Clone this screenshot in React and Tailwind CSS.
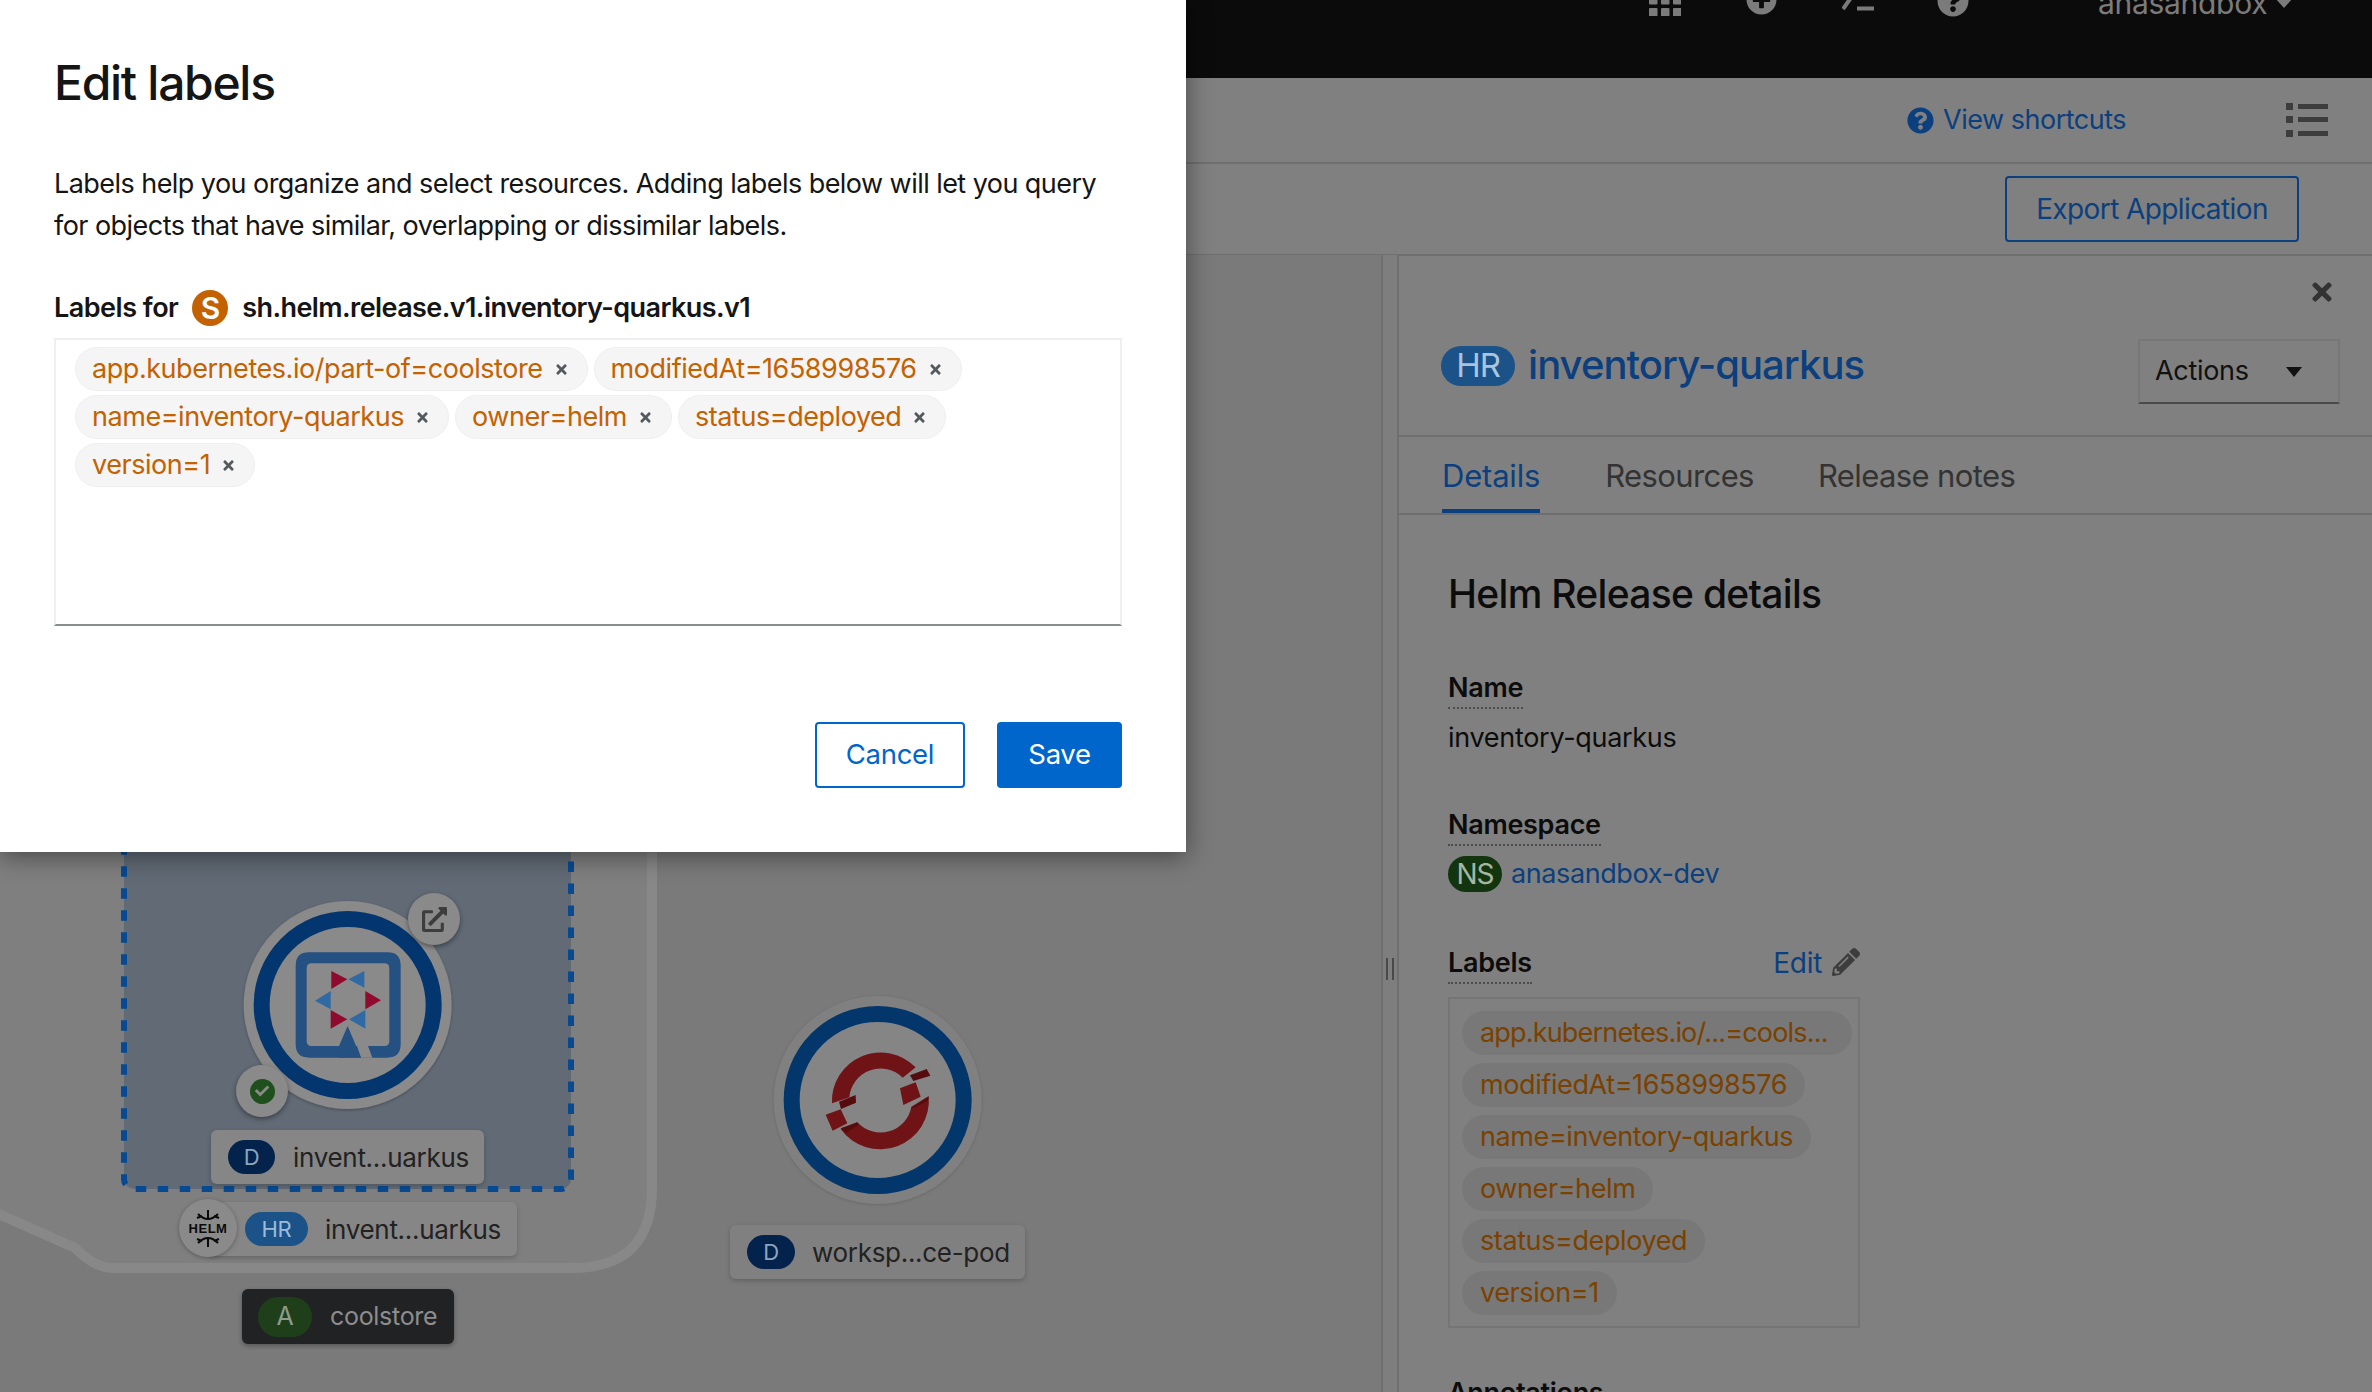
import React from "react";
import { FaQuestionCircle, FaPencilAlt, FaTimes, FaCheck, FaExternalLinkAlt, FaPlusCircle } from "react-icons/fa";

function ModalChip({ text }) {
  return (
    <span className="inline-flex items-center h-[44px] rounded-full bg-[#f5f5f5] border border-[#efefef] pl-[16px] pr-[18px] text-[#c46100] text-[27px] tracking-[-0.45px] whitespace-nowrap">
      {text}
      <FaTimes className="ml-[11px] w-[15px] h-[15px] text-[#55595e]" />
    </span>
  );
}

function PanelChip({ text, className = "tracking-[-0.4px] pr-[18px]" }) {
  return (
    <span className={`inline-flex self-start items-center h-[44px] rounded-full bg-[#787878] pl-[18px] text-[#7a4100] text-[27px] whitespace-nowrap ${className}`}>
      {text}
    </span>
  );
}

function NodeLabel({ badge, text, className, badgeClass }) {
  return (
    <div className={`absolute flex items-center h-[54px] rounded-[6px] bg-[#868686] shadow-[0_2px_5px_rgba(0,0,0,0.2)] text-[#222222] text-[26px] tracking-[-0.3px] whitespace-nowrap ${className}`}>
      <span className={`flex items-center justify-center h-[34px] rounded-full bg-[#03234d] text-[#8fa3bc] text-[22px] ${badgeClass}`}>{badge}</span>
      {text}
    </div>
  );
}

function Term({ children }) {
  return <span className="inline-block text-[#0c0c0c] text-[27px] font-semibold tracking-[-0.3px] leading-[34px] pb-[2px] border-b-2 border-dotted border-[#4d4d4d]">{children}</span>;
}

export default function App() {
  return (
    <div className="relative w-[2372px] h-[1392px] overflow-hidden bg-[#7a7a7a] [font-family:Inter,sans-serif]">
      {/* masthead */}
      <div className="h-[78px] bg-[#0b0b0b] flex items-start text-[#7b7b7b] pl-[1649px]">
        <svg viewBox="0 0 32 32" className="w-[32px] h-[32px] -mt-[16px]" fill="#7b7b7b">
          {[0, 12, 24].map((x) => [0, 12, 24].map((y) => <rect key={x + "-" + y} x={x} y={y} width="8.5" height="8.5" rx="1" />))}
        </svg>
        <FaPlusCircle className="w-[31px] h-[31px] -mt-[16px] ml-[65px]" />
        <svg viewBox="0 0 32 24" className="w-[32px] h-[24px] -mt-[13px] ml-[65px]" fill="none" stroke="#7b7b7b" strokeWidth="4">
          <path d="M1 22 L8 12" />
          <path d="M15 21.5 H32" />
        </svg>
        <FaQuestionCircle className="w-[32px] h-[32px] -mt-[15px] ml-[63px]" />
        <span className="text-[30px] leading-[32px] -mt-[13px] ml-[129px] tracking-[-0.3px]">anasandbox</span>
        <svg viewBox="0 0 18 10" className="w-[18px] h-[10px] -mt-[2px] ml-[8px]" fill="#7b7b7b"><path d="M0 0 H18 L9 10 Z" /></svg>
      </div>

      {/* shortcuts bar */}
      <div className="h-[86px] bg-[#808080] border-b-2 border-[#6f6f6f] flex items-center justify-end pr-[44px]">
        <FaQuestionCircle className="w-[27px] h-[27px] text-[#0b3f7e]" />
        <span className="ml-[9px] text-[#0b3f7e] text-[27px] tracking-[-0.5px]">View shortcuts</span>
        <svg viewBox="0 0 42 34" className="w-[42px] h-[34px] ml-[160px]" fill="#3d3d3d">
          <rect x="0" y="0" width="7" height="7" />
          <rect x="12" y="1" width="30" height="5" />
          <rect x="0" y="13" width="7" height="7" />
          <rect x="12" y="14" width="30" height="5" />
          <rect x="0" y="27" width="7" height="7" />
          <rect x="12" y="28" width="30" height="5" />
        </svg>
      </div>

      {/* toolbar */}
      <div className="h-[92px] bg-[#808080] border-b-2 border-[#6f6f6f] flex items-center justify-end pr-[73px]">
        <span className="flex items-center justify-center w-[294px] h-[66px] rounded-[4px] border-2 border-[#0b3f7e] text-[#0b3f7e] text-[28px] tracking-[-0.6px]">Export Application</span>
      </div>

      {/* body */}
      <div className="flex h-[1136px]">
        <div className="relative w-[1381px] -mt-px h-[1137px] bg-[#7a7a7a]">
          <svg viewBox="0 255 1381 1137" className="absolute left-0 top-0 w-[1381px] h-[1137px]">
            <path d="M652 700 V1188 Q652 1268 572 1268 H112 Q95 1268 75 1248 L-10 1210 V700 Z" fill="#7f7f7f" stroke="#888888" strokeWidth="10" />
            <rect x="124" y="700" width="447" height="489" rx="10" fill="#616a75" stroke="#074a91" strokeWidth="6" strokeDasharray="10.5 11.5" />
          </svg>

          {/* quarkus node */}
          <svg viewBox="0 0 840 720" className="absolute left-[200px] top-[625px] w-[280px] h-[240px]">
            <defs>
              <filter id="s1" x="-20%" y="-20%" width="140%" height="140%">
                <feDropShadow dx="0" dy="3" stdDeviation="5" floodColor="#000" floodOpacity="0.3" />
              </filter>
            </defs>
            <circle cx="443" cy="375" r="312" fill="#8a8a8a" filter="url(#s1)" />
            <circle cx="443" cy="375" r="258" fill="none" stroke="#03366f" strokeWidth="48" />
            <path fillRule="evenodd" fill="#245082" d="M327 217 H562 Q602 217 602 257 V493 Q602 533 562 533 H327 Q287 533 287 493 V257 Q287 217 327 217 Z M335 250 Q320 250 320 265 V483 Q320 498 335 498 H553 Q568 498 568 483 V265 Q568 250 553 250 Z" />
            <polygon points="483,533 517,533 503,495 470,495" fill="#8a8a8a" />
            <polygon points="443,438 417,498 417,533 483,533" fill="#245082" />
            <g fill="#8f0a2e">
              <polygon points="394,273 442,298 394,327" />
              <polygon points="496,333 543,361 496,388" />
              <polygon points="392,390 442,418 392,446" />
            </g>
            <g fill="#2f6aa5">
              <polygon points="493,273 445,298 493,323" />
              <polygon points="345,362 392,333 392,388" />
              <polygon points="496,390 447,418 496,446" />
            </g>
          </svg>
          <div className="absolute left-[408px] top-[638px] w-[52px] h-[52px] rounded-full bg-[#8a8a8a] shadow-[0_2px_5px_rgba(0,0,0,0.4)] flex items-center justify-center">
            <FaExternalLinkAlt className="w-[25px] h-[25px] text-[#3d3d3d]" />
          </div>
          <div className="absolute left-[236px] top-[810px] w-[52px] h-[52px] rounded-full bg-[#8a8a8a] shadow-[0_2px_5px_rgba(0,0,0,0.4)] flex items-center justify-center">
            <span className="w-[25px] h-[25px] rounded-full bg-[#1f4f1c] flex items-center justify-center">
              <FaCheck className="w-[14px] h-[14px] text-[#8a8a8a]" />
            </span>
          </div>

          <NodeLabel badge="D" text="invent...uarkus" className="left-[211px] top-[875px] w-[273px] pl-[17px]" badgeClass="w-[47px] mr-[18px]" />
          <NodeLabel badge="HR" text="invent...uarkus" className="left-[208px] top-[947px] w-[309px] pl-[37px]" badgeClass="w-[63px] mr-[17px] !bg-[#1b5288] !text-[#9dbbd8]" />
          <div className="absolute left-[179px] top-[944px] w-[58px] h-[58px] rounded-full bg-[#8a8a8a] shadow-[0_1px_4px_rgba(0,0,0,0.3)] flex flex-col items-center justify-center">
            <svg viewBox="0 0 30 12" className="w-[30px] h-[12px]" fill="none" stroke="#0a0a0a" strokeWidth="2">
              <path d="M5 4 Q15 14 25 4 M15 0 V9 M4 8 L9 6 M26 8 L21 6" />
            </svg>
            <span className="text-[13px] leading-[13px] font-bold text-[#0a0a0a] tracking-[0.5px] [font-family:'Liberation_Sans',sans-serif]">HELM</span>
            <svg viewBox="0 0 30 12" className="w-[30px] h-[12px]" fill="none" stroke="#0a0a0a" strokeWidth="2">
              <path d="M5 8 Q15 -2 25 8 M15 3 V12 M4 4 L9 6 M26 4 L21 6" />
            </svg>
          </div>

          <div className="absolute left-[242px] top-[1034px] w-[212px] h-[55px] rounded-[6px] bg-[#212224] shadow-[0_2px_5px_rgba(0,0,0,0.3)] flex items-center pl-[16px] text-[#8d8d8d] text-[25px] tracking-[-0.3px]">
            <span className="flex items-center justify-center w-[54px] h-[40px] rounded-full bg-[#1f3f1b] text-[#8d9c8b] mr-[18px]">A</span>
            coolstore
          </div>

          {/* workspace node */}
          <svg viewBox="0 0 750 690" className="absolute left-[750px] top-[725px] w-[250px] h-[230px]">
            <circle cx="383" cy="360" r="312" fill="#808080" filter="drop-shadow(0 2px 4px rgba(0,0,0,0.15))" />
            <circle cx="383" cy="360" r="258" fill="#858585" stroke="#03366b" strokeWidth="48" />
            <g fill="#701316">
              <path d="M246 370 A146 146 0 0 1 497 262 L458 293 A94 94 0 0 0 298 352 Z" />
              <path d="M536 348 A146 146 0 0 1 272 447 L322 427 A94 94 0 0 0 484 380 Z" />
              <polygon points="450,325 497,307 512,350 460,375" />
              <polygon points="227,404 272,388 292,430 248,452" />
            </g>
            <g fill="#560c0f">
              <polygon points="480,286 530,267 541,287 490,303" />
              <polygon points="267,365 317,345 318,368 273,387" />
              <polygon points="483,385 536,350 534,362 490,385" />
              <polygon points="272,445 322,427 326,435 288,458" />
            </g>
          </svg>
          <NodeLabel badge="D" text="worksp...ce-pod" className="left-[730px] top-[970px] w-[295px] pl-[17px] !bg-[#808080]" badgeClass="w-[48px] mr-[17px]" />
        </div>

        {/* divider */}
        <div className="w-[18px] -mt-px h-[1137px] border-l-2 border-r-2 border-[#6f6f6f] bg-[#7e7e7e] flex justify-center pt-[703px]">
          <div className="w-[8px] h-[22px] border-l-2 border-r-2 border-[#4a4a4a]"></div>
        </div>

        {/* side panel */}
        <div className="flex-1 h-full bg-[#808080] flex flex-col overflow-hidden">
          <div className="h-[181px] shrink-0 border-b-2 border-[#6f6f6f] flex flex-col">
            <div className="h-[83px] flex items-start justify-end pt-[22px] pr-[36px]">
              <FaTimes className="w-[28px] h-[28px] text-[#333333]" />
            </div>
            <div className="flex items-start pl-[42px] pr-[32px]">
              <span className="mt-[7px] flex items-center justify-center w-[74px] h-[40px] rounded-full bg-[#1b5288] text-[#a9c4de] text-[33px] tracking-[-1.2px]">HR</span>
              <span className="mt-[3px] ml-[13px] text-[#0b3f7e] text-[40px] font-medium tracking-[-0.95px] leading-[46px]">inventory-quarkus</span>
              <div className="ml-auto w-[202px] h-[65px] border-t-2 border-l-2 border-r-2 border-[#777777] border-b-2 !border-b-[#4a4a4a] flex items-center pl-[15px] text-[#111111] text-[27px] tracking-[-0.3px]">
                Actions
                <svg viewBox="0 0 16 10" className="w-[16px] h-[10px] ml-[37px]" fill="#111111"><path d="M0 0 H16 L8 10 Z" /></svg>
              </div>
            </div>
          </div>
          <div className="h-[78px] shrink-0 border-b-2 border-[#6f6f6f] flex items-start pl-[43px] text-[31px] tracking-[-0.6px] text-[#333333]">
            <span className="h-[76px] pt-[16px] border-b-4 border-[#0b3f7e] text-[#0b3f7e] tracking-[-0.2px]">Details</span>
            <span className="pt-[16px] ml-[65px]">Resources</span>
            <span className="pt-[16px] ml-[64px]">Release notes</span>
          </div>
          <div className="pl-[49px] pt-[54px] flex flex-col">
            <div className="text-[#0c0c0c] text-[39px] font-medium tracking-[-0.7px] leading-[50px]">Helm Release details</div>
            <div className="mt-[52px]"><Term>Name</Term></div>
            <div className="mt-[11px] text-[#0c0c0c] text-[27px] tracking-[-0.3px] leading-[36px]">inventory-quarkus</div>
            <div className="pt-[52px]"><Term>Namespace</Term></div>
            <div className="mt-[10px] flex items-center h-[36px]">
              <span className="flex items-center justify-center w-[54px] h-[36px] rounded-full bg-[#12350f] text-[#a6b6a3] text-[28px] tracking-[-1px]">NS</span>
              <span className="ml-[9px] text-[#0b3f7e] text-[27px] tracking-[-0.4px]">anasandbox-dev</span>
            </div>
            <div className="pt-[53px] flex items-center w-[412px]">
              <Term>Labels</Term>
              <span className="ml-auto -mt-[3px] text-[#0b3f7e] text-[28px] tracking-[-0.3px]">Edit</span>
              <FaPencilAlt className="ml-[10px] -mt-[6px] w-[28px] h-[28px] text-[#3d3d3d]" />
            </div>
            <div className="mt-[13px] w-[412px] h-[331px] border-2 border-[#757575] pl-[12px] pt-[12px] flex flex-col gap-[8px]">
              <PanelChip text="app.kubernetes.io/...=cools..." className="tracking-[-0.82px] pr-[24px]" />
              <PanelChip text="modifiedAt=1658998576" />
              <PanelChip text="name=inventory-quarkus" />
              <PanelChip text="owner=helm" />
              <PanelChip text="status=deployed" />
              <PanelChip text="version=1" />
            </div>
            <div className="mt-[48px]"><span className="text-[#0c0c0c] text-[27px] font-semibold tracking-[-0.3px] leading-[34px]">Annotations</span></div>
          </div>
        </div>
      </div>

      {/* modal */}
      <div className="absolute left-0 top-0 w-[1186px] h-[852px] bg-white shadow-[0_4px_24px_rgba(0,0,0,0.45)] px-[54px] flex flex-col">
        <h1 className="mt-[52px] text-[#151515] text-[48px] font-medium leading-[62px] tracking-[-1.3px]">Edit labels</h1>
        <p className="mt-[49px] text-[#151515] text-[27px] leading-[42px] tracking-[-0.55px] w-[1068px]">Labels help you organize and select resources. Adding labels below will let you query for objects that have similar, overlapping or dissimilar labels.</p>
        <div className="mt-[43px] flex items-center h-[36px] text-[#151515] text-[27px] font-semibold tracking-[-0.5px]">
          Labels for
          <span className="ml-[14px] flex items-center justify-center w-[36px] h-[36px] rounded-full bg-[#c46100] text-white text-[30px]">S</span>
          <span className="ml-[14px] tracking-[-0.58px]">sh.helm.release.v1.inventory-quarkus.v1</span>
        </div>
        <div className="mt-[12px] w-[1068px] h-[288px] border-2 border-[#efefef] border-b-[#8a8d90] pl-[19px] pt-[7px] flex flex-col gap-[4px]">
          <div className="flex gap-[6px]">
            <ModalChip text="app.kubernetes.io/part-of=coolstore" />
            <ModalChip text="modifiedAt=1658998576" />
          </div>
          <div className="flex gap-[6px]">
            <ModalChip text="name=inventory-quarkus" />
            <ModalChip text="owner=helm" />
            <ModalChip text="status=deployed" />
          </div>
          <div className="flex gap-[6px]">
            <ModalChip text="version=1" />
          </div>
        </div>
        <div className="mt-[96px] flex justify-end w-[1068px] gap-[32px] text-[27.5px] tracking-[-0.3px]">
          <span className="flex items-center justify-center w-[150px] h-[66px] rounded-[4px] border-2 border-[#0066cc] text-[#0066cc]">Cancel</span>
          <span className="flex items-center justify-center w-[125px] h-[66px] rounded-[4px] bg-[#0066cc] text-white">Save</span>
        </div>
      </div>
    </div>
  );
}
